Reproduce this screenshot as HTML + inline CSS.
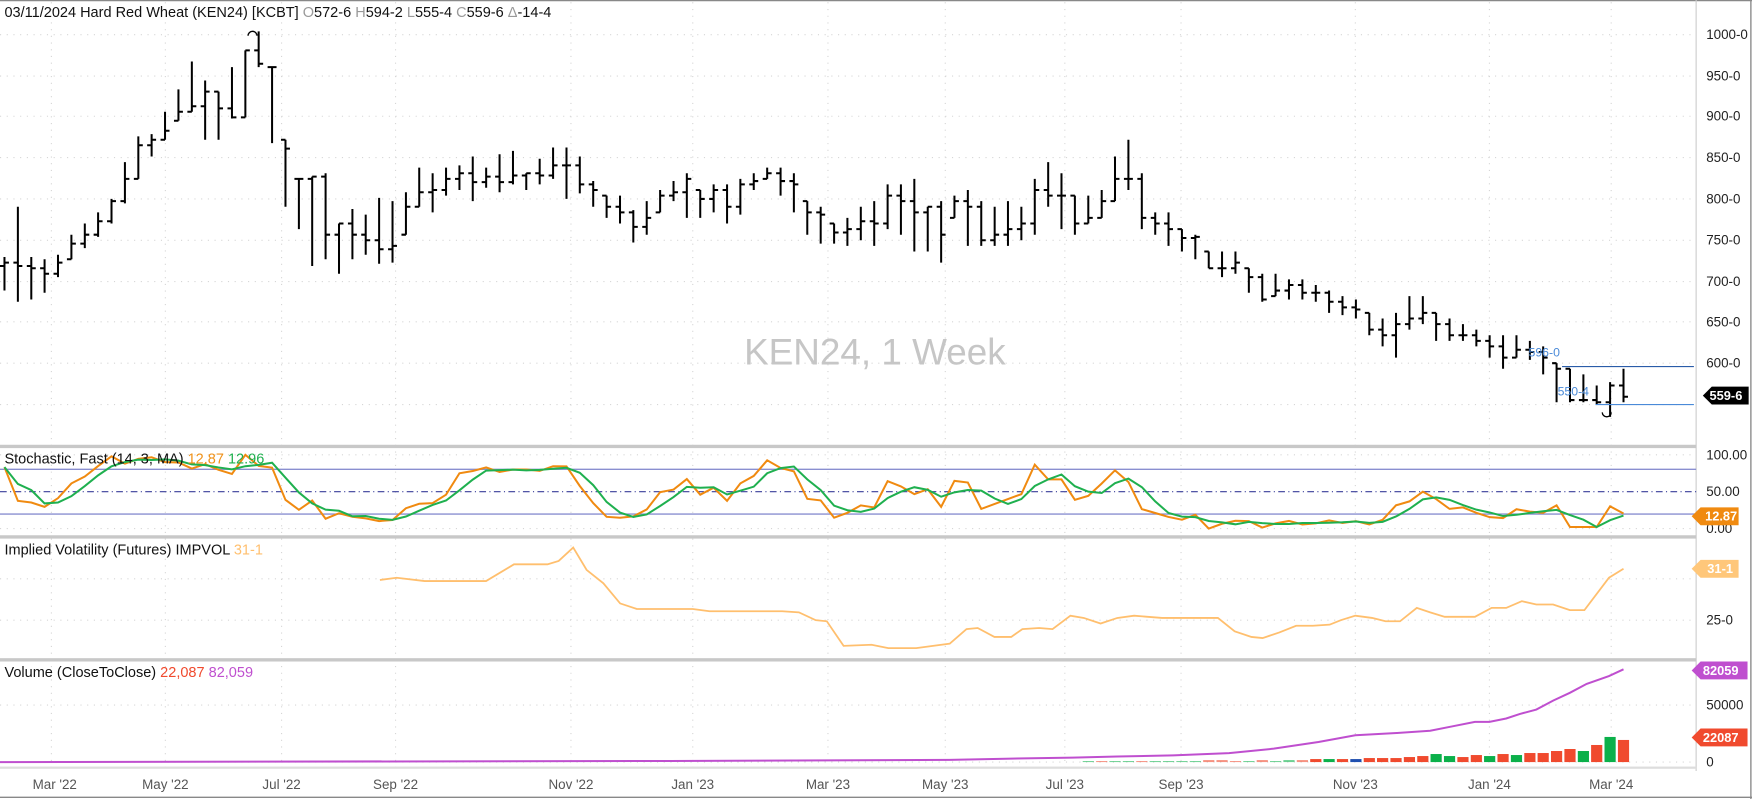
<!DOCTYPE html>
<html><head><meta charset="utf-8"><style>
html,body{margin:0;padding:0;background:#fff;overflow:hidden}
svg{display:block}
text{font-family:"Liberation Sans",sans-serif}
</style></head><body>
<svg id="s" width="1752" height="799" viewBox="0 0 1568 715" xmlns="http://www.w3.org/2000/svg">
<rect width="1568" height="715" fill="#fff"/>
<g id="grid" stroke="#d6d6d6" stroke-dasharray="1,5" stroke-width="1"></g>
<!-- frame -->
<line x1="0" y1="0.5" x2="1568" y2="0.5" stroke="#888" stroke-width="1.2"/>
<line x1="1567" y1="0" x2="1567" y2="715" stroke="#888" stroke-width="1.2"/>
<line x1="0" y1="713.5" x2="1568" y2="713.5" stroke="#888" stroke-width="1.2"/>
<line x1="1518" y1="0" x2="1518" y2="690" stroke="#ccc" stroke-width="1"/>
<rect x="0" y="398" width="1518" height="3" fill="#c8c8c8"/>
<rect x="0" y="479" width="1518" height="3" fill="#c8c8c8"/>
<rect x="0" y="589" width="1518" height="3" fill="#c8c8c8"/>
<rect x="0" y="686" width="1518" height="2" fill="#ddd"/>
<text x="783" y="326" font-size="33" fill="#c6c6c6" text-anchor="middle">KEN24, 1 Week</text>
<g id="bars" stroke="#000" stroke-width="1.8" fill="none"></g>
<!-- stochastic guides -->
<line x1="0" y1="420" x2="1518" y2="420" stroke="#8a8fd0" stroke-width="1.2"/>
<line x1="0" y1="440" x2="1518" y2="440" stroke="#3a3f9a" stroke-width="1" stroke-dasharray="6,3,1,3"/>
<line x1="0" y1="460" x2="1518" y2="460" stroke="#8a8fd0" stroke-width="1.2"/>
<g id="stoch" fill="none" stroke-width="1.8"></g>
<polyline id="iv" fill="none" stroke="#ffbf6e" stroke-width="1.6" points=""/>
<g id="vol"></g>
<polyline id="vma" fill="none" stroke="#bf4fcf" stroke-width="1.8" points=""/>
<!-- blue level lines -->
<line x1="1398" y1="328" x2="1516" y2="328" stroke="#2a5ca8" stroke-width="1"/>
<line x1="1428" y1="362" x2="1516" y2="362" stroke="#4a8ad8" stroke-width="1"/>
<text x="1368" y="319" font-size="11" fill="#4a8ad8">596-0</text>
<text x="1394" y="354" font-size="11" fill="#4a8ad8">550-4</text>
<path d="M222 32 a4 4 0 0 1 8 0" stroke="#000" fill="none" stroke-width="1.2"/>
<path d="M1434 369 a4 4 0 0 0 8 0" stroke="#000" fill="none" stroke-width="1.2"/>
<!-- titles -->
<text x="4" y="15" font-size="13" fill="#111">03/11/2024 Hard Red Wheat (KEN24) [KCBT] <tspan fill="#999">O</tspan>572-6 <tspan fill="#999">H</tspan>594-2 <tspan fill="#999">L</tspan>555-4 <tspan fill="#999">C</tspan>559-6 <tspan fill="#999">Δ</tspan>-14-4</text>
<text x="4" y="415" font-size="13" fill="#111">Stochastic, Fast  (14, 3, MA) <tspan fill="#f0921a">12.87</tspan> <tspan fill="#1fb04f">12.96</tspan></text>
<text x="4" y="496" font-size="13" fill="#111">Implied Volatility (Futures) IMPVOL <tspan fill="#ffbf6e">31-1</tspan></text>
<text x="4" y="606" font-size="13" fill="#111">Volume  (CloseToClose) <tspan fill="#f04a2e">22,087</tspan> <tspan fill="#bf4fcf">82,059</tspan></text>
<!-- right axis -->
<g font-size="12" fill="#222">
<text x="1527" y="35">1000-0</text><text x="1527" y="72">950-0</text><text x="1527" y="108">900-0</text>
<text x="1527" y="145">850-0</text><text x="1527" y="182">800-0</text><text x="1527" y="219">750-0</text>
<text x="1527" y="256">700-0</text><text x="1527" y="292">650-0</text><text x="1527" y="329">600-0</text>
<text x="1527" y="411">100.00</text><text x="1527" y="444">50.00</text><text x="1527" y="477">0.00</text>
<text x="1527" y="559">25-0</text>
<text x="1527" y="635">50000</text><text x="1527" y="686">0</text>
</g>
<path d="M1524 354 l8 -8 h33 v16 h-33z" fill="#000"/><text x="1530" y="358" font-size="11.5" font-weight="bold" fill="#fff">559-6</text>
<path d="M1514 462 l8 -8 h34 v16 h-34z" fill="#f08a10"/><text x="1526" y="466" font-size="11.5" font-weight="bold" fill="#fff">12.87</text>
<path d="M1514 509 l8 -8 h34 v16 h-34z" fill="#ffc77a"/><text x="1528" y="513" font-size="11.5" font-weight="bold" fill="#fff">31-1</text>
<path d="M1514 600 l8 -8 h42 v16 h-42z" fill="#bf4fcf"/><text x="1524" y="604" font-size="11.5" font-weight="bold" fill="#fff">82059</text>
<path d="M1514 660 l8 -8 h42 v16 h-42z" fill="#f04a2e"/><text x="1524" y="664" font-size="11.5" font-weight="bold" fill="#fff">22087</text>
<!-- x axis -->
<g font-size="12" fill="#555" text-anchor="middle">
<text x="49" y="706">Mar '22</text><text x="148" y="706">May '22</text><text x="252" y="706">Jul '22</text>
<text x="354" y="706">Sep '22</text><text x="511" y="706">Nov '22</text><text x="620" y="706">Jan '23</text>
<text x="741" y="706">Mar '23</text><text x="846" y="706">May '23</text><text x="953" y="706">Jul '23</text>
<text x="1057" y="706">Sep '23</text><text x="1213" y="706">Nov '23</text><text x="1333" y="706">Jan '24</text>
<text x="1442" y="706">Mar '24</text>
</g>
</svg>
<script>
var NS="http://www.w3.org/2000/svg";
function el(p,t,a){var e=document.createElementNS(NS,t);for(var k in a)e.setAttribute(k,a[k]);p.appendChild(e);return e;}
var g=document.getElementById('grid');
[46,148,252,354,511,620,741,846,953,1057,1213,1333,1442].forEach(function(x){el(g,'line',{x1:x,y1:2,x2:x,y2:690});});
[31,68,104,141,178,215,252,288,325,362,407,473,518,555,631,682].forEach(function(y){el(g,'line',{x1:0,y1:y,x2:1516,y2:y});});
var D=[[235,230,260],[238,185,270],[240,230,268],[245,232,262],[235,228,248],[218,210,232],[210,200,222],[198,190,212],[180,178,200],[160,145,182],[130,122,160],[125,120,140],[117,100,125],[100,80,108],[95,55,100],[82,72,125],[97,82,125],[105,60,106],[45,50,105],[57,28,60],[60,65,128],[133,125,185],[160,160,205],[158,158,238],[210,155,232],[200,205,245],[210,187,232],[215,192,228],[223,177,236],[220,180,235],[185,172,210],[172,150,185],[170,155,190],[160,150,175],[155,148,170],[163,140,180],[158,150,168],[163,138,172],[157,135,165],[155,155,170],[157,142,165],[148,132,160],[148,132,178],[165,140,173],[170,162,185],[185,175,195],[190,175,200],[203,188,217],[195,180,210],[175,170,190],[172,162,180],[160,155,195],[178,170,195],[170,165,190],[185,165,200],[165,160,192],[162,155,170],[155,150,160],[162,150,175],[165,155,190],[190,180,210],[192,185,218],[208,200,218],[205,195,220],[198,185,215],[200,180,220],[175,165,205],[180,165,210],[190,160,225],[185,185,225],[210,180,235],[180,175,195],[185,170,220],[215,180,220],[210,185,220],[205,180,220],[200,185,215],[170,160,210],[175,145,185],[175,155,205],[200,175,210],[195,175,200],[180,170,195],[160,140,180],[160,125,170],[195,155,205],[200,190,210],[205,190,220],[213,205,225],[212,210,232],[240,225,240],[240,225,248],[235,225,245],[248,240,262],[268,245,270],[260,245,265],[255,250,268],[262,250,268],[262,255,270],[270,260,280],[275,265,282],[277,268,285],[295,280,300],[300,285,310],[290,280,320],[285,265,295],[280,265,290],[290,280,305],[300,285,305],[300,290,305],[305,295,310],[310,300,320],[320,300,330],[313,300,320],[315,305,322],[320,310,335],[330,325,360],[358,330,360],[358,335,360],[360,345,362],[345,342,373],[355,330,360]];
var n=D.length,step=1449/(n-1),X=function(i){return 4+i*step;};
var b=document.getElementById('bars'),d="";
for(var i=0;i<n;i++){var c=D[i][0],h=Math.min(D[i][1],c),l=Math.max(D[i][2],c),o=i?D[i-1][0]:c+3;o=Math.max(h,Math.min(l,o));var x=X(i).toFixed(1);
d+="M"+x+" "+h+"V"+l+"M"+(X(i)-4).toFixed(1)+" "+o+"H"+x+"M"+x+" "+c+"H"+(X(i)+4).toFixed(1);}
el(b,'path',{d:d});
// stochastic
var K=[];for(i=0;i<n;i++){var hh=1e9,ll=-1e9;for(var j=Math.max(0,i-13);j<=i;j++){hh=Math.min(hh,D[j][1],D[j][0]);ll=Math.max(ll,D[j][2],D[j][0]);}K.push(ll==hh?50:(ll-D[i][0])/(ll-hh)*100);}
var Dd=K.map(function(v,i){var s=0,c=0;for(var j=Math.max(0,i-2);j<=i;j++){s+=K[j];c++;}return s/c;});
function ys(v){return 473-v*0.66;}
var st=document.getElementById('stoch');
el(st,'polyline',{stroke:'#f08a10',points:K.map(function(v,i){return X(i).toFixed(1)+","+ys(v).toFixed(1);}).join(" ")});
el(st,'polyline',{stroke:'#1fb04f',points:Dd.map(function(v,i){return X(i).toFixed(1)+","+ys(v).toFixed(1);}).join(" ")});
document.getElementById('iv').setAttribute('points',"340,519 355,517 380,520 420,520 435,520 460,505 490,505 500,502 513,490 525,510 540,522 555,540 570,545 620,545 635,547 700,547 715,548 730,555 740,556 755,578 780,577 795,580 820,580 835,578 850,576 865,563 875,562 890,570 905,570 915,563 930,562 942,563 958,551 970,553 985,558 1000,553 1015,551 1040,553 1060,553 1090,553 1105,565 1120,570 1130,571 1145,566 1160,560 1175,560 1190,559 1200,555 1213,551 1228,553 1240,556 1253,556 1268,544 1280,548 1293,552 1308,552 1320,552 1335,544 1348,544 1362,538 1375,541 1390,541 1405,546 1418,546 1440,517 1453,509");
document.getElementById('vma').setAttribute('points',"0,682 600,681 850,680 900,679 960,678 1000,677 1050,676 1100,674 1140,670 1180,664 1213,658 1250,656 1280,654 1300,650 1320,646 1333,646 1348,643 1360,639 1375,635 1390,627 1405,620 1420,612 1440,605 1453,599");
var v=document.getElementById('vol'),hs=[1,1,1,1,1,1,1,1,1,2,2,1,1,2,1,2,2,3,3,3,3,4,4,4,5,6,8,6,5,7,6,8,7,9,9,11,13,11,17,25,22];
var cols="GRGGRGGGGRRRGRGGRRGRBRRRRRGGRRGRGRRRRGRGR";
for(i=0;i<hs.length;i++){var k=n-hs.length+i,hh=hs[i]*0.9;var cc=cols[i]=='G'?'#0bb04a':cols[i]=='B'?'#2050b0':'#f04a2e';var op=hs[i]<3?0.6:1;
el(v,'rect',{x:(X(k)-5).toFixed(1),y:(682-hh).toFixed(1),width:10,height:hh.toFixed(1),fill:cc,opacity:op});}
</script>
</body></html>
